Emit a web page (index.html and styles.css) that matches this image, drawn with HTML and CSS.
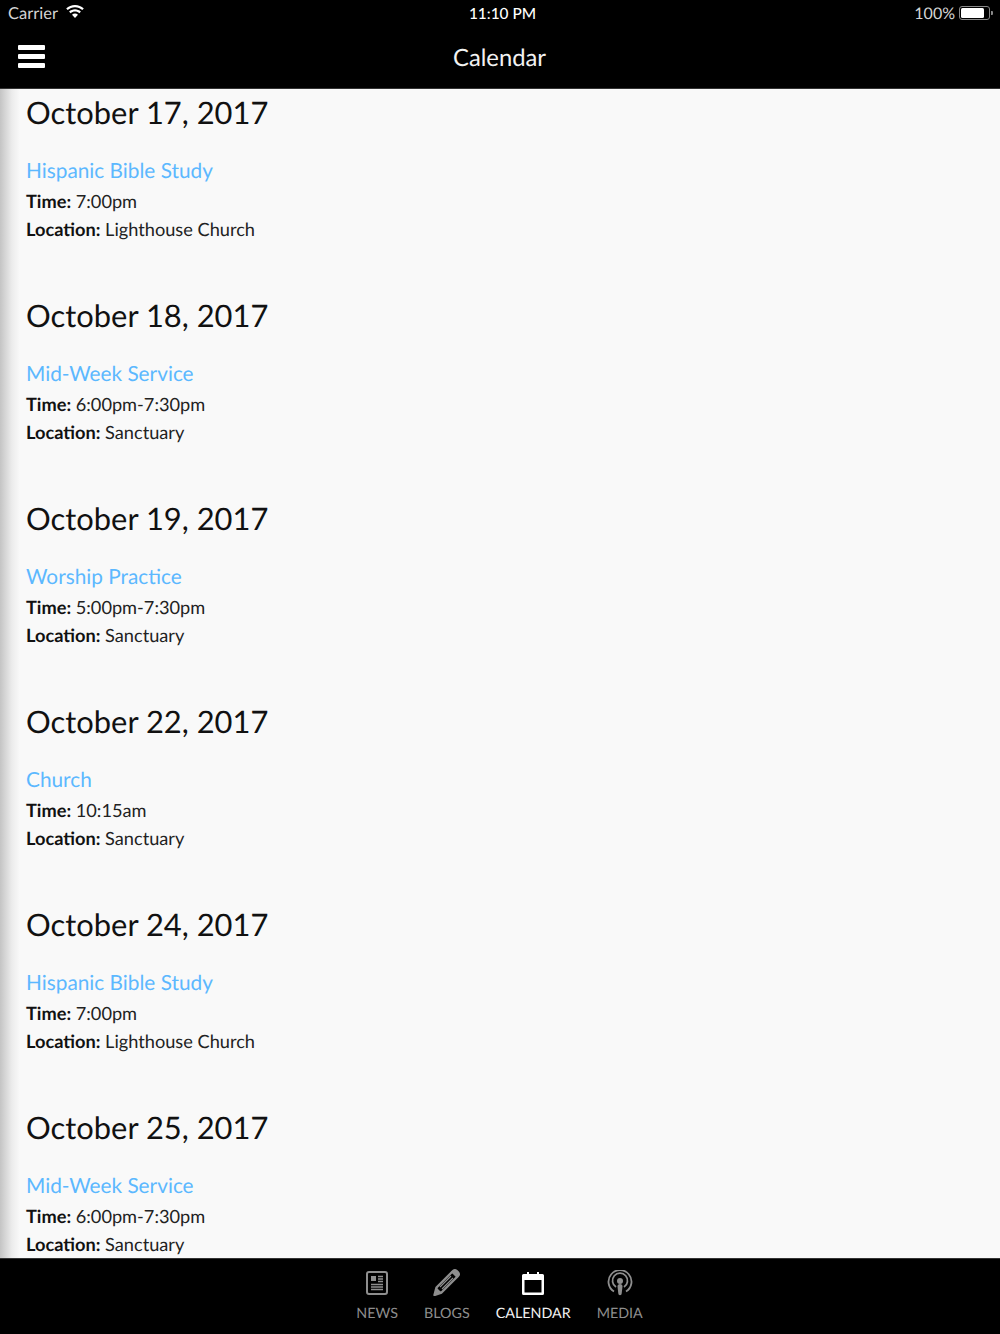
FILE: index.html
```html
<!DOCTYPE html>
<html lang="en">
<head>
<meta charset="utf-8">
<title>Calendar</title>
<link rel="stylesheet" href="styles.css">
</head>
<body>
<div class="app">
  <header class="top">
    <div class="status">
      <div class="status-left">
        <span>Carrier</span>
        <svg class="wifi" width="18" height="13" viewBox="0 0 18 13"><path fill="#fff" d="M9 0C5.600 0 2.500 1.300.2 3.500l1.500 1.600C3.600 3.300 6.200 2.200 9 2.200s5.400 1.100 7.300 2.900l1.500-1.600C15.500 1.300 12.400 0 9 0zM9 4.300c-2.300 0-4.300.9-5.900 2.300l1.500 1.600C5.800 7.100 7.300 6.500 9 6.500s3.200.6 4.400 1.700l1.500-1.600C13.300 5.200 11.300 4.300 9 4.300zM9 8.600c-1.100 0-2.200.4-3 1.200L9 13l3-3.200c-.8-.8-1.900-1.200-3-1.200z"/></svg>
      </div>
      <div class="clock">11:10 PM</div>
      <div class="status-right">
        <span>100%</span>
        <span class="battery"><span class="battery-fill"></span></span>
        <span class="battery-tip"></span>
      </div>
    </div>
    <div class="navbar">
      <div class="burger"><i></i><i></i><i></i></div>
      <div class="nav-title">Calendar</div>
    </div>
  </header>
  <main class="content">
    <section class="day">
      <h2>October 17, 2017</h2>
      <a class="event">Hispanic Bible Study</a>
      <p><b>Time:</b> 7:00pm</p>
      <p><b>Location:</b> Lighthouse Church</p>
    </section>
    <section class="day">
      <h2>October 18, 2017</h2>
      <a class="event">Mid-Week Service</a>
      <p><b>Time:</b> 6:00pm-7:30pm</p>
      <p><b>Location:</b> Sanctuary</p>
    </section>
    <section class="day">
      <h2>October 19, 2017</h2>
      <a class="event">Worship Practice</a>
      <p><b>Time:</b> 5:00pm-7:30pm</p>
      <p><b>Location:</b> Sanctuary</p>
    </section>
    <section class="day">
      <h2>October 22, 2017</h2>
      <a class="event">Church</a>
      <p><b>Time:</b> 10:15am</p>
      <p><b>Location:</b> Sanctuary</p>
    </section>
    <section class="day">
      <h2>October 24, 2017</h2>
      <a class="event">Hispanic Bible Study</a>
      <p><b>Time:</b> 7:00pm</p>
      <p><b>Location:</b> Lighthouse Church</p>
    </section>
    <section class="day">
      <h2>October 25, 2017</h2>
      <a class="event">Mid-Week Service</a>
      <p><b>Time:</b> 6:00pm-7:30pm</p>
      <p><b>Location:</b> Sanctuary</p>
    </section>
  </main>
  <nav class="tabs">
    <div class="tab">
      <svg class="ico ico-up" width="22" height="24" viewBox="0 0 22 24" fill="none"><rect x="1" y="1" width="20" height="22" rx="2" stroke="#8e8e8e" stroke-width="2"/><path d="M5 5h5v5H5z" fill="#8e8e8e"/><path d="M12 5.500h5M12 8h5M12 10.500h5M5 13.500h12M5 16h12M5 18.500h12" stroke="#8e8e8e" stroke-width="1.300"/></svg>
      <span>NEWS</span>
    </div>
    <div class="tab">
      <svg class="ico" width="28" height="28" viewBox="0 0 28 28" fill="none"><path d="M1.500 27l2-7.500L19.500 3.500l5 5L8.500 24.500z" stroke="#8e8e8e" stroke-width="2.400" stroke-linejoin="round"/><path d="M1.500 27l2-7.500 5 5z" fill="#8e8e8e"/><path d="M20 1.500a3 3 0 0 1 2-.5c2 0 5 3 5 5a3 3 0 0 1-.5 2L24 10l-6-6z" fill="#8e8e8e"/><path d="M7 19L18 8M9 21L20 10" stroke="#8e8e8e" stroke-width="1.200"/></svg>
      <span>BLOGS</span>
    </div>
    <div class="tab active">
      <svg class="ico ico-up" width="24" height="24" viewBox="0 0 24 24" fill="none"><path d="M2.500 3H6V1h2v2h8V1h2v2h3.500A1.500 1.500 0 0 1 23 4.500v18a1.500 1.500 0 0 1-1.500 1.500h-19A1.500 1.500 0 0 1 1 22.500v-18A1.500 1.500 0 0 1 2.500 3zM3.500 9v12.500h17V9z" fill="#fff" fill-rule="evenodd"/></svg>
      <span>CALENDAR</span>
    </div>
    <div class="tab">
      <svg class="ico" width="26" height="26" viewBox="0 0 26 26" fill="none"><path d="M7 21.500a11.500 11.500 0 1 1 12 0" stroke="#8e8e8e" stroke-width="1.800"/><path d="M9 17a7.500 7.500 0 1 1 8 0" stroke="#8e8e8e" stroke-width="1.800"/><circle cx="13" cy="11" r="3" fill="#8e8e8e"/><path d="M10.500 16.500a2.500 2.500 0 0 1 5 0l-.8 7a1.700 1.700 0 0 1-3.400 0z" fill="#8e8e8e"/></svg>
      <span>MEDIA</span>
    </div>
  </nav>
</div>
</body>
</html>
```
FILE: styles.css
```css
* { box-sizing: border-box; }
html, body { margin: 0; height: 100%; }
body { font-family: Lato, "Open Sans", sans-serif; background: #000; text-rendering: geometricPrecision; }
.app { width: 1000px; height: 1334px; display: flex; flex-direction: column; overflow: hidden; }
.top { height: 89px; flex: none; background: #000; color: #fff; border-bottom: 1px solid #333; }
.status { height: 26px; display: flex; align-items: center; justify-content: space-between; padding: 0 8px; position: relative; font-size: 16.500px; color: #d4d4d4; }
.status-left, .status-right { display: flex; align-items: center; }
.status-left { gap: 8px; }
.wifi { margin-top: -4px; }
.clock { position: absolute; left: 0; right: 0; top: 5px; text-align: center; font-size: 15.400px; line-height: 18px; font-weight: 500; color: #fff; padding-left: 5px; }
.status-right span:first-child { margin-right: 4px; font-size: 16px; }
.battery { width: 31px; height: 14px; border: 1px solid #888; border-radius: 3px; padding: 1px; display: flex; }
.battery-fill { flex: 1; background: #fff; border-radius: 1.500px; }
.battery-tip { width: 2px; height: 4px; background: #888; margin-left: 1px; margin-right: -1px; border-radius: 0 1px 1px 0; }
.navbar { height: 62px; position: relative; display: flex; align-items: center; justify-content: center; }
.burger { position: absolute; left: 18px; top: 19px; width: 27px; display: flex; flex-direction: column; gap: 4px; }
.burger i { display: block; height: 5px; background: #fff; border-radius: 1px; }
.nav-title { font-size: 23.800px; color: #f2f2f2; margin-top: 2px; padding-right: 1px; }
.content { flex: 1; min-height: 0; overflow: hidden; background: #f9f9f9 linear-gradient(to right, #c4c4c4, #ececec 12px, #f9f9f9 20px); padding: 0 0 0 26px; }
.day { height: 203px; display: flex; flex-direction: column; align-items: flex-start; }
.day h2 { margin: 4px 0 0; font-size: 30.900px; line-height: 40px; font-weight: 400; color: #111; }
.event { margin-top: 23px; font-size: 20.800px; line-height: 29.500px; color: #5cb8ff; }
.day p { margin: 0; font-size: 18.200px; line-height: 27.500px; color: #222; }
.day p:first-of-type { margin: 2px 0 1px; }
.day p b { font-weight: 700; color: #111; }
.tabs { height: 76px; flex: none; background: #000; border-top: 1px solid #333; display: flex; justify-content: center; align-items: stretch; gap: 26px; padding-right: 1px; }
.tab { display: flex; flex-direction: column; align-items: center; color: #8e8e8e; font-size: 14.300px; padding-bottom: 11px; justify-content: flex-end; }
.tab span { line-height: 18px; }
.ico { margin-bottom: 9px; }
.ico-up { margin-bottom: 10px; }
.tab.active { color: #f2f2f2; }
```
